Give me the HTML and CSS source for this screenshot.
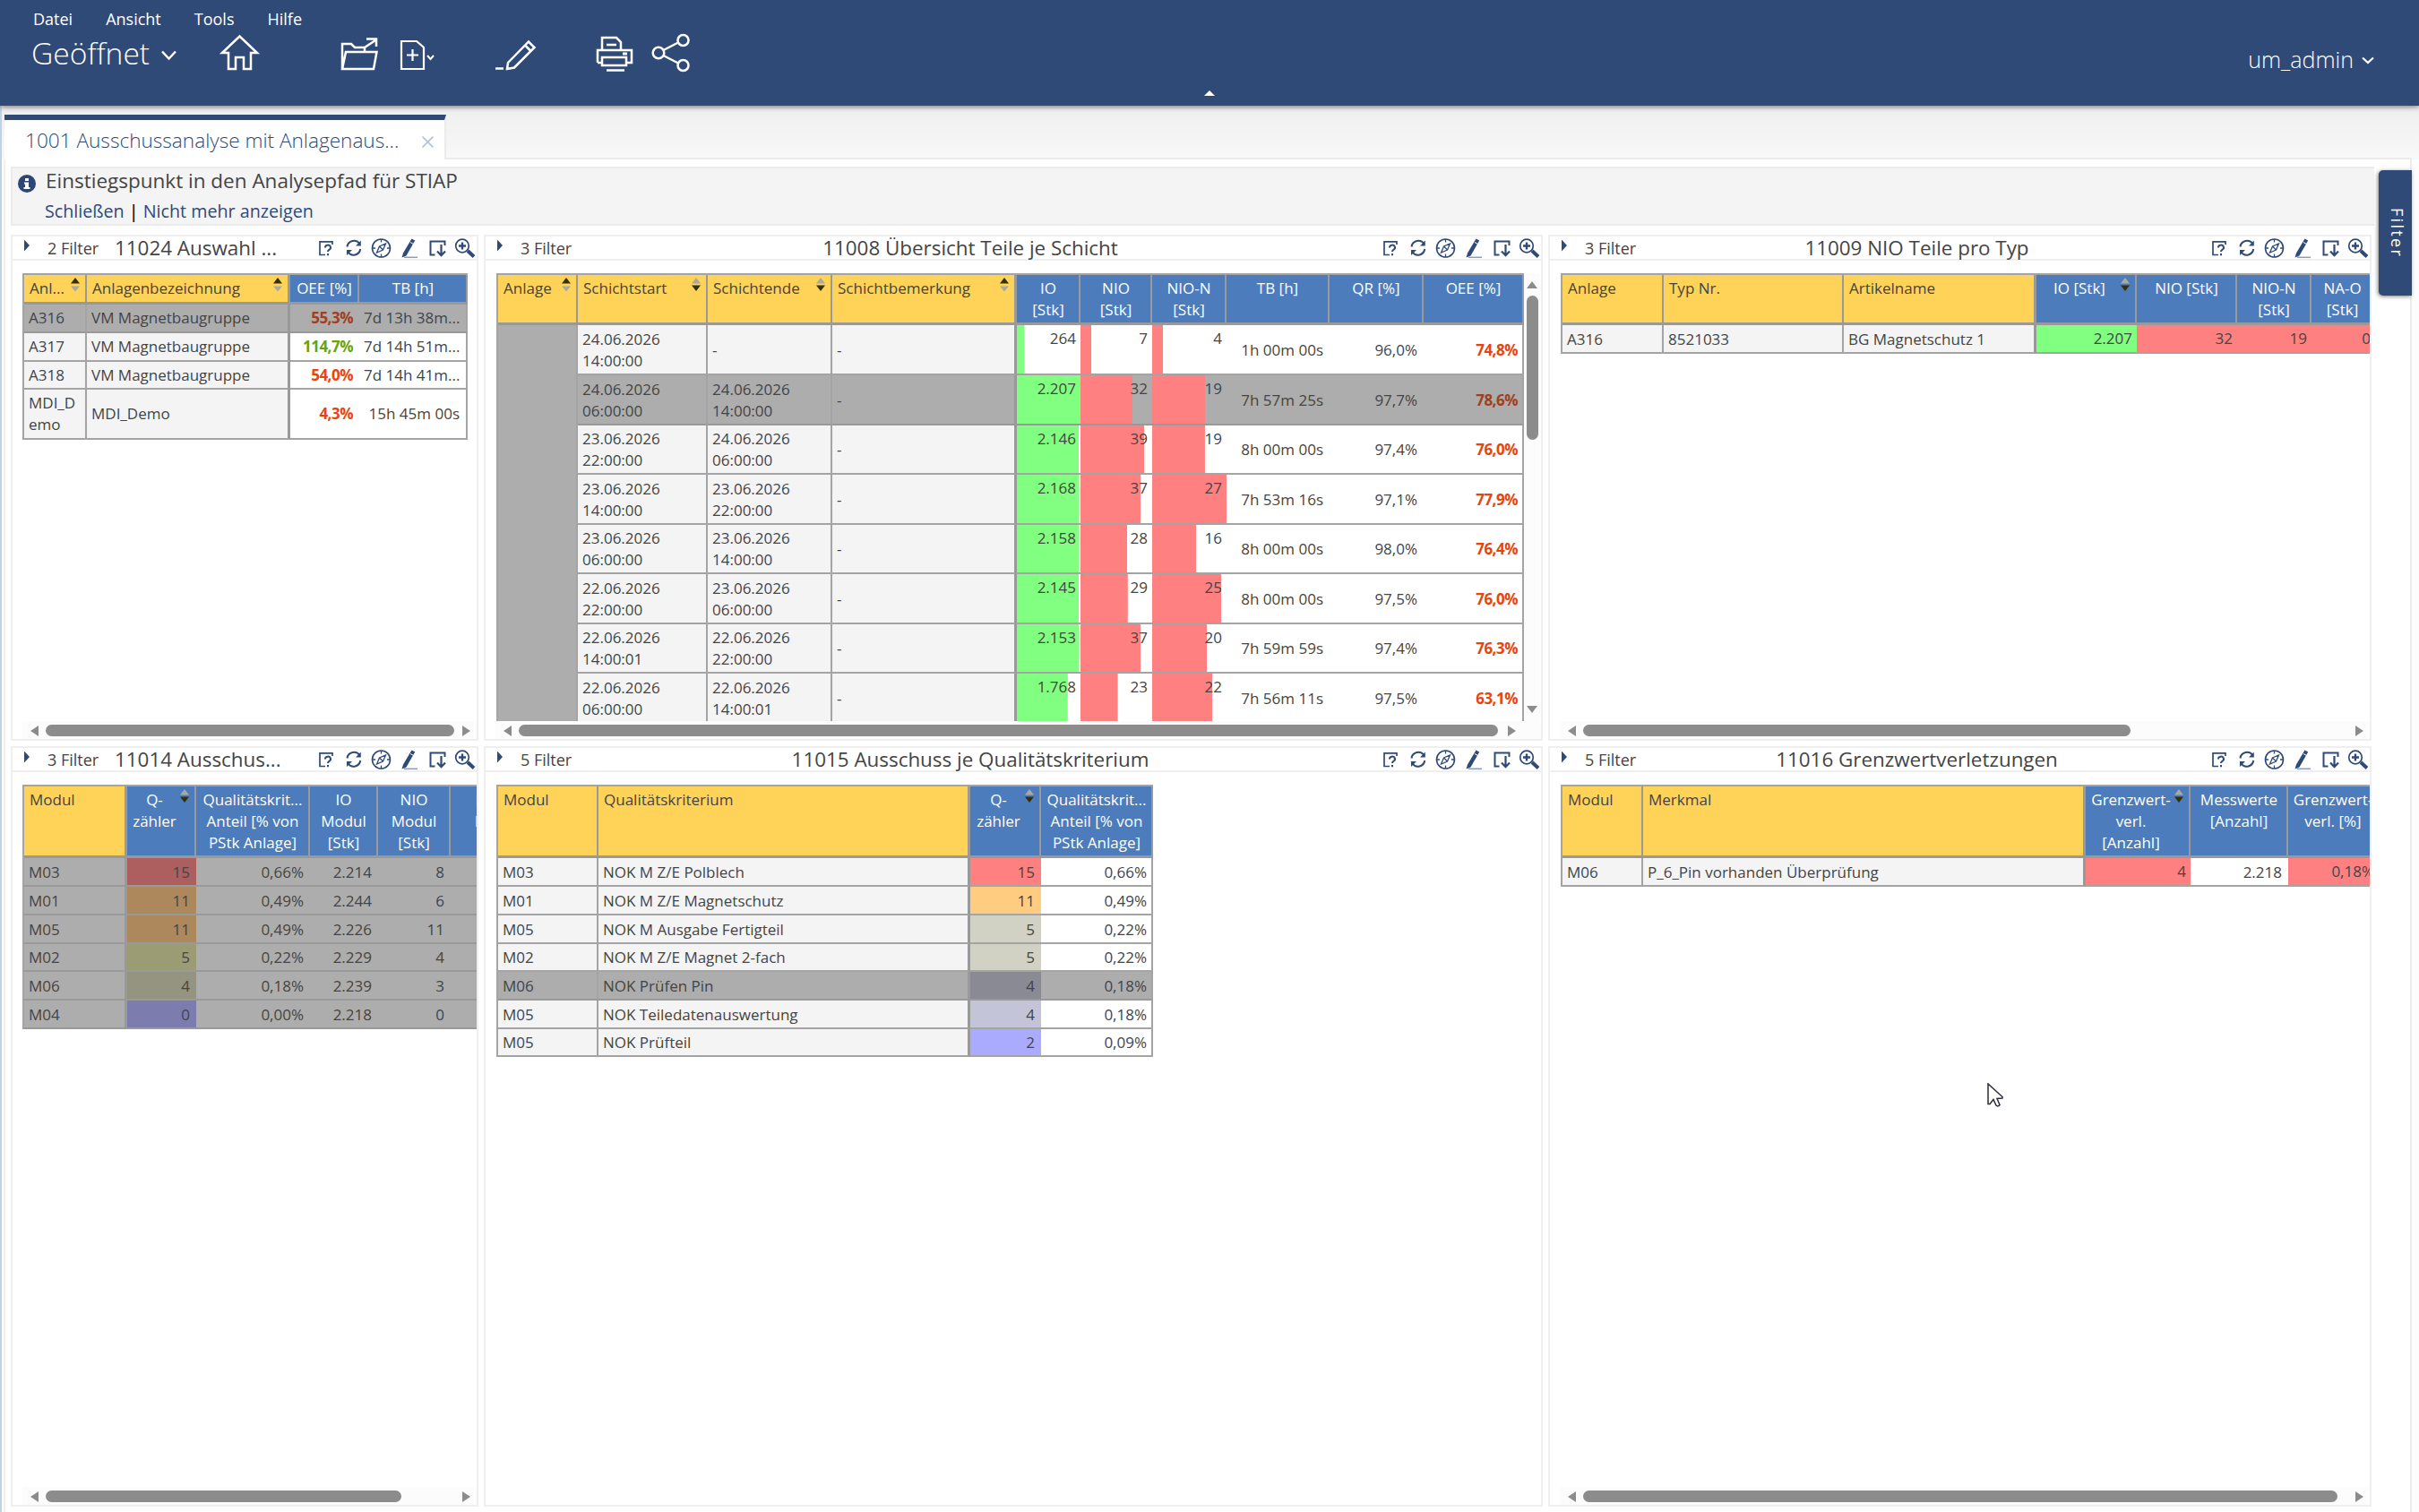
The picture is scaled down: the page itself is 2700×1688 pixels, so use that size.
FILE: index.html
```html
<!DOCTYPE html>
<html lang="de">
<head>
<meta charset="utf-8">
<title>1001 Ausschussanalyse mit Anlagenauswahl</title>
<link rel="stylesheet" href="styles.css">
</head>
<body>
<svg class="defs" aria-hidden="true">
  <symbol id="tools" viewBox="0 0 186 26">
    <g fill="none" stroke="#304a78" stroke-width="1.8">
      <path d="M15 20.5H9V5.800H23V9" stroke-width="1.700"/>
      <path d="M15 12.500a3 2.700 0 1 1 4.600 2.100q-1.600 1-1.600 2.400M18 19v2.200" stroke-width="2"/>
      <path d="M39.500 11.500A7.600 7.600 0 0 1 53.500 8.500M54.200 14A7.600 7.600 0 0 1 40.500 17.500" stroke-width="2"/>
      <path d="M54.800 4.500V10.500H49ZM39 21V15H45Z" fill="#304a78" stroke="none"/>
      <circle cx="77.500" cy="13" r="10" stroke-width="1.600"/>
      <path d="M77.500 3v3.500M77.500 19.500V23M67.500 13H71M84 13h3.500M82.500 8L79.500 15L72.500 18L75.500 11ZM79.500 15L75.500 11" stroke-width="1.300"/>
      <path d="M103 23.300H118" stroke="#8a9bbb" stroke-width="1.500"/>
      <path d="M111.500 2.500L115.200 4.500L105.500 21.500L100.500 23.500L102 18.500Z" fill="#304a78" stroke="none"/>
      <path d="M110 6.500L114 8.700" stroke="#fff" stroke-width="1"/>
      <path d="M137.500 20.500H132.500V5.500H148.500V10" stroke-width="2"/>
      <path d="M144.500 9V21M140 16.500L144.500 21.200L149 16.500" stroke-width="2.200"/>
      <circle cx="168" cy="10.500" r="7.300" stroke-width="1.700"/>
      <path d="M168 6.500v8M164 10.500h8" stroke-width="2.400"/>
      <path d="M174 16L181 22.500" stroke-width="4"/>
    </g>
  </symbol>
  <symbol id="asc" viewBox="0 0 10 16"><path d="M0 6.500L5 0L10 6.500Z" fill="#33300a"/><path d="M0 9.500L5 15.500L10 9.500Z" fill="#a9a9a0"/></symbol>
  <symbol id="desc" viewBox="0 0 10 16"><path d="M0 6.500L5 0L10 6.500Z" fill="#a9a9a0"/><path d="M0 8.500L5 15L10 8.500Z" fill="#33300a"/></symbol>
  <symbol id="left" viewBox="0 0 9 12"><path d="M9 0V12L0 6Z" fill="#8c8c8c"/></symbol>
  <symbol id="right" viewBox="0 0 9 12"><path d="M0 0V12L9 6Z" fill="#8c8c8c"/></symbol>
</svg>

<header class="topbar">
  <nav class="menu"><span>Datei</span><span>Ansicht</span><span>Tools</span><span>Hilfe</span></nav>
  <div class="state">Geöffnet</div>
  <svg class="toolbar" viewBox="0 0 640 50" fill="none" stroke="#fff" stroke-width="2.500">
    <path d="M13 23.500L20.500 31.500L28 23.500"/>
    <path d="M80 25L99.500 6.500L119 25H112V43H104V30H95V43H87V25Z"/>
    <path d="M214 43V15H224L228 19H239V24M214 43L218 24H252.500L249 43ZM239 19L251 11M241 9.500H252V18"/>
    <path d="M280 12H297L305 19V43H280ZM292.500 21V34M286 27.500H299" stroke-width="2.200"/><path d="M309 28L312.500 32L316 28" stroke-width="2"/>
    <path d="M385 42.500H394" /><path d="M398 43L399 36L422 12.500L428.500 19L406 41.500ZM418 16.500L424.500 23"/>
    <path d="M504 22V8H520L525 13V22M509 16H520M499 36V22H537V36H531M505 36H499M504 30H531V39H504ZM509 44.500H529"/><path d="M527 26h5" stroke-width="3"/>
    <circle cx="567" cy="25" r="6.300"/><circle cx="594.500" cy="11" r="6"/><circle cx="594.500" cy="39" r="6"/><path d="M572.500 22L589 13.500M572.500 28L589 36.500"/>
  </svg>
  <div class="user">um_admin<svg viewBox="0 0 14 9" fill="none" stroke="#fff" stroke-width="2.200"><path d="M1 1.500L7 7L13 1.500"/></svg></div>
  <svg class="collapse" viewBox="0 0 12 6"><path d="M0 6L6 0L12 6Z" fill="#fff"/></svg>
</header>

<div class="tabs">
  <div class="tab"><span>1001 Ausschussanalyse mit Anlagenaus...</span><svg viewBox="0 0 12 12" stroke="#b4c0dc" stroke-width="1.500"><path d="M0.500 0.500L11.500 11.500M11.500 0.500L0.500 11.500"/></svg></div>
  <div class="tab-rest"></div>
</div>

<main class="workspace">
  <section class="info">
    <svg viewBox="0 0 20 20"><circle cx="10" cy="10" r="10" fill="#2c4676"/><path d="M8 4h4v3h-4zM7 8.500h5v5.500h1.500v2H6.500v-2H8v-3.500H7z" fill="#fff"/></svg>
    <div class="info-text"><div class="info-title">Einstiegspunkt in den Analysepfad für STIAP</div>
    <div class="info-links"><a>Schließen</a> <b>|</b> <a>Nicht mehr anzeigen</a></div></div>
  </section>

  <div class="panels">
    <section class="panel narrow">
      <div class="head"><i class="tri"></i><span class="count">2 Filter</span><h2>11024 Auswahl ...</h2><svg class="tools"><use href="#tools"/></svg></div>
      <div class="content">
        <table class="t-anlage">
          <colgroup><col class="w70"><col class="w227"><col class="w77"><col class="w121"></colgroup>
          <tr class="h33"><th>Anl...<svg><use href="#asc"/></svg></th><th class="e">Anlagenbezeichnung<svg><use href="#asc"/></svg></th><th class="b">OEE [%]</th><th class="b">TB [h]</th></tr>
          <tr class="sel h32"><td>A316</td><td class="e">VM Magnetbaugruppe</td><td class="v bad">55,3%</td><td class="v l">7d 13h 38m...</td></tr>
          <tr class="h32"><td>A317</td><td class="e">VM Magnetbaugruppe</td><td class="v good">114,7%</td><td class="v l">7d 14h 51m...</td></tr>
          <tr class="h31"><td>A318</td><td class="e">VM Magnetbaugruppe</td><td class="v bad">54,0%</td><td class="v l">7d 14h 41m...</td></tr>
          <tr class="h56"><td>MDI_D<br>emo</td><td class="e">MDI_Demo</td><td class="v bad">4,3%</td><td class="v l">15h 45m 00s</td></tr>
        </table>
      </div>
      <div class="hscroll"><svg><use href="#left"/></svg><i class="thumb th1"></i><svg class="end"><use href="#right"/></svg></div>
    </section>

    <section class="panel">
      <div class="head"><i class="tri"></i><span class="count">3 Filter</span><h2>11008 Übersicht Teile je Schicht</h2><svg class="tools"><use href="#tools"/></svg></div>
      <div class="content">
        <table class="t-schicht">
          <colgroup><col class="w89"><col class="w145"><col class="w139"><col class="w206"><col class="w71"><col class="w80"><col class="w83"><col class="w115"><col class="w105"><col class="w112"></colgroup>
          <tr class="h56"><th>Anlage<svg><use href="#asc"/></svg></th><th>Schichtstart<svg><use href="#desc"/></svg></th><th>Schichtende<svg><use href="#desc"/></svg></th><th class="e">Schichtbemerkung<svg><use href="#asc"/></svg></th><th class="b">IO<br>[Stk]</th><th class="b">NIO<br>[Stk]</th><th class="b">NIO-N<br>[Stk]</th><th class="b">TB [h]</th><th class="b">QR [%]</th><th class="b">OEE [%]</th></tr>
          <tr class="h56"><td class="merged" rowspan="8"></td><td>24.06.2026<br>14:00:00</td><td>-</td><td class="e">-</td><td class="v io" style="--v:12%">264</td><td class="v nio" style="--v:15.500%">7</td><td class="v nio" style="--v:14.500%">4</td><td class="v">1h 00m 00s</td><td class="v">96,0%</td><td class="v bad l">74,8%</td></tr>
          <tr class="sel h56"><td>24.06.2026<br>06:00:00</td><td>24.06.2026<br>14:00:00</td><td class="e">-</td><td class="v io" style="--v:100%">2.207</td><td class="v nio" style="--v:73%">32</td><td class="v nio" style="--v:71%">19</td><td class="v">7h 57m 25s</td><td class="v">97,7%</td><td class="v bad l">78,6%</td></tr>
          <tr class="h55"><td>23.06.2026<br>22:00:00</td><td>24.06.2026<br>06:00:00</td><td class="e">-</td><td class="v io" style="--v:97.500%">2.146</td><td class="v nio" style="--v:89%">39</td><td class="v nio" style="--v:71%">19</td><td class="v">8h 00m 00s</td><td class="v">97,4%</td><td class="v bad l">76,0%</td></tr>
          <tr class="h56"><td>23.06.2026<br>14:00:00</td><td>23.06.2026<br>22:00:00</td><td class="e">-</td><td class="v io" style="--v:98%">2.168</td><td class="v nio" style="--v:84%">37</td><td class="v nio" style="--v:100%">27</td><td class="v">7h 53m 16s</td><td class="v">97,1%</td><td class="v bad l">77,9%</td></tr>
          <tr class="h55"><td>23.06.2026<br>06:00:00</td><td>23.06.2026<br>14:00:00</td><td class="e">-</td><td class="v io" style="--v:98%">2.158</td><td class="v nio" style="--v:65%">28</td><td class="v nio" style="--v:59%">16</td><td class="v">8h 00m 00s</td><td class="v">98,0%</td><td class="v bad l">76,4%</td></tr>
          <tr class="h56"><td>22.06.2026<br>22:00:00</td><td>23.06.2026<br>06:00:00</td><td class="e">-</td><td class="v io" style="--v:97.500%">2.145</td><td class="v nio" style="--v:66%">29</td><td class="v nio" style="--v:93%">25</td><td class="v">8h 00m 00s</td><td class="v">97,5%</td><td class="v bad l">76,0%</td></tr>
          <tr class="h55"><td>22.06.2026<br>14:00:01</td><td>22.06.2026<br>22:00:00</td><td class="e">-</td><td class="v io" style="--v:98%">2.153</td><td class="v nio" style="--v:84%">37</td><td class="v nio" style="--v:74%">20</td><td class="v">7h 59m 59s</td><td class="v">97,4%</td><td class="v bad l">76,3%</td></tr>
          <tr class="h56"><td>22.06.2026<br>06:00:00</td><td>22.06.2026<br>14:00:01</td><td class="e">-</td><td class="v io" style="--v:80%">1.768</td><td class="v nio" style="--v:52%">23</td><td class="v nio" style="--v:81%">22</td><td class="v">7h 56m 11s</td><td class="v">97,5%</td><td class="v bad l">63,1%</td></tr>
        </table>
        <div class="vscroll"><svg viewBox="0 0 12 8"><path d="M0 8L6 0L12 8Z"/></svg><i></i><svg class="end" viewBox="0 0 12 8"><path d="M0 0L6 8L12 0Z"/></svg></div>
      </div>
      <div class="hscroll inset"><svg><use href="#left"/></svg><i class="thumb th2"></i><svg class="end"><use href="#right"/></svg></div>
    </section>

    <section class="panel">
      <div class="head"><i class="tri"></i><span class="count">3 Filter</span><h2>11009 NIO Teile pro Typ</h2><svg class="tools"><use href="#tools"/></svg></div>
      <div class="content">
        <table class="t-typ">
          <colgroup><col class="w113"><col class="w201"><col class="w215"><col class="w112"><col class="w112"><col class="w83"><col class="w83"></colgroup>
          <tr class="h56"><th>Anlage</th><th>Typ Nr.</th><th class="e">Artikelname</th><th class="b s">IO [Stk]<svg><use href="#desc"/></svg></th><th class="b">NIO [Stk]</th><th class="b">NIO-N<br>[Stk]</th><th class="b n">NA-O<br>[Stk]</th></tr>
          <tr class="h32"><td>A316</td><td>8521033</td><td class="e">BG Magnetschutz 1</td><td class="v io" style="--v:100%">2.207</td><td class="v nio" style="--v:100%">32</td><td class="v nio" style="--v:100%">19</td><td class="v nio far" style="--v:100%">0</td></tr>
        </table>
      </div>
      <div class="hscroll"><svg><use href="#left"/></svg><i class="thumb th3"></i><svg class="end"><use href="#right"/></svg></div>
    </section>

    <section class="panel narrow">
      <div class="head"><i class="tri"></i><span class="count">3 Filter</span><h2>11014 Ausschus...</h2><svg class="tools"><use href="#tools"/></svg></div>
      <div class="content">
        <table class="t-modul">
          <colgroup><col class="w115"><col class="w77"><col class="w127"><col class="w76"><col class="w81"><col class="w105"></colgroup>
          <tr class="h80"><th class="e">Modul</th><th class="b s">Q-<br>zähler<svg><use href="#desc"/></svg></th><th class="b">Qualitätskrit...<br>Anteil [% von<br>PStk Anlage]</th><th class="b">IO<br>Modul<br>[Stk]</th><th class="b">NIO<br>Modul<br>[Stk]</th><th class="b">NIO-N<br>Modul</th></tr>
          <tr class="sel h32"><td class="e">M03</td><td class="v q15">15</td><td class="v">0,66%</td><td class="v">2.214</td><td class="v">8</td><td class="v"></td></tr>
          <tr class="sel h32"><td class="e">M01</td><td class="v q11">11</td><td class="v">0,49%</td><td class="v">2.244</td><td class="v">6</td><td class="v"></td></tr>
          <tr class="sel h32"><td class="e">M05</td><td class="v q11">11</td><td class="v">0,49%</td><td class="v">2.226</td><td class="v">11</td><td class="v"></td></tr>
          <tr class="sel h31"><td class="e">M02</td><td class="v q5">5</td><td class="v">0,22%</td><td class="v">2.229</td><td class="v">4</td><td class="v"></td></tr>
          <tr class="sel h32"><td class="e">M06</td><td class="v q4">4</td><td class="v">0,18%</td><td class="v">2.239</td><td class="v">3</td><td class="v"></td></tr>
          <tr class="sel h32"><td class="e">M04</td><td class="v q0">0</td><td class="v">0,00%</td><td class="v">2.218</td><td class="v">0</td><td class="v"></td></tr>
        </table>
      </div>
      <div class="hscroll"><svg><use href="#left"/></svg><i class="thumb th4"></i><svg class="end"><use href="#right"/></svg></div>
    </section>

    <section class="panel">
      <div class="head"><i class="tri"></i><span class="count">5 Filter</span><h2>11015 Ausschuss je Qualitätskriterium</h2><svg class="tools"><use href="#tools"/></svg></div>
      <div class="content">
        <table class="t-krit">
          <colgroup><col class="w112"><col class="w415"><col class="w79"><col class="w125"></colgroup>
          <tr class="h80"><th>Modul</th><th class="e">Qualitätskriterium</th><th class="b s">Q-<br>zähler<svg><use href="#desc"/></svg></th><th class="b">Qualitätskrit...<br>Anteil [% von<br>PStk Anlage]</th></tr>
          <tr class="h32"><td>M03</td><td class="e">NOK M Z/E Polblech</td><td class="v k1">15</td><td class="v l">0,66%</td></tr>
          <tr class="h32"><td>M01</td><td class="e">NOK M Z/E Magnetschutz</td><td class="v k2">11</td><td class="v l">0,49%</td></tr>
          <tr class="h32"><td>M05</td><td class="e">NOK M Ausgabe Fertigteil</td><td class="v k3">5</td><td class="v l">0,22%</td></tr>
          <tr class="h31"><td>M02</td><td class="e">NOK M Z/E Magnet 2-fach</td><td class="v k3">5</td><td class="v l">0,22%</td></tr>
          <tr class="sel h32"><td>M06</td><td class="e">NOK Prüfen Pin</td><td class="v k4">4</td><td class="v l">0,18%</td></tr>
          <tr class="h32"><td>M05</td><td class="e">NOK Teiledatenauswertung</td><td class="v k5">4</td><td class="v l">0,18%</td></tr>
          <tr class="h31"><td>M05</td><td class="e">NOK Prüfteil</td><td class="v k6">2</td><td class="v l">0,09%</td></tr>
        </table>
      </div>
    </section>

    <section class="panel">
      <div class="head"><i class="tri"></i><span class="count">5 Filter</span><h2>11016 Grenzwertverletzungen</h2><svg class="tools"><use href="#tools"/></svg></div>
      <div class="content">
        <table class="t-grenz">
          <colgroup><col class="w90"><col class="w494"><col class="w117"><col class="w109"><col class="w101"></colgroup>
          <tr class="h80"><th>Modul</th><th class="e">Merkmal</th><th class="b s">Grenzwert-<br>verl.<br>[Anzahl]<svg><use href="#desc"/></svg></th><th class="b">Messwerte<br>[Anzahl]</th><th class="b">Grenzwert-<br>verl. [%]</th></tr>
          <tr class="h32"><td>M06</td><td class="e">P_6_Pin vorhanden Überprüfung</td><td class="v nio" style="--v:100%">4</td><td class="v">2.218</td><td class="v nio" style="--v:100%">0,18%</td></tr>
        </table>
      </div>
      <div class="hscroll"><svg><use href="#left"/></svg><i class="thumb th6"></i><svg class="end"><use href="#right"/></svg></div>
    </section>
  </div>
  <aside class="filter-tab">Filter</aside>
</main>
<svg class="pointer" viewBox="0 0 18 27"><path d="M1 1V23.500H3L7 18.500L10 25Q12 27 14 24.500L11 17.500L17 17V15.500Z" fill="#fff" stroke="#2d2d3c" stroke-width="1.500"/></svg>
</body>
</html>
```
FILE: styles.css
```css
* { box-sizing: border-box; }
body { margin: 0; width: 2700px; height: 1688px; overflow: hidden; display: flex; flex-direction: column; background: #fcfcfc; font-family: "Open Sans", "Noto Sans", sans-serif; color: #444; }
svg { display: block; flex: none; }
.defs { position: absolute; width: 0; height: 0; }

/* top bar */
.topbar { position: relative; z-index: 2; height: 118px; flex: none; background: #304a78; color: #fff; box-shadow: 0 1px 6px rgba(0,0,0,.55); display: grid; grid-template-columns: 168px 640px 1fr auto; grid-template-rows: 33px 50px 35px; }
.menu { grid-column: 1 / 5; grid-row: 1; display: flex; gap: 37px; padding-left: 37px; font-size: 18px; line-height: 24px; padding-top: 9px; }
.state { grid-column: 1; grid-row: 2; padding-left: 35px; font-size: 33.600px; font-weight: 300; line-height: 50px; margin-top: 1px; white-space: nowrap; }
.toolbar { grid-column: 2; grid-row: 2; width: 640px; height: 50px; margin-top: 1px; }
.user { grid-column: 4; grid-row: 2; display: flex; align-items: center; gap: 9px; padding: 16px 50px 0 0; font-size: 25px; font-weight: 300; line-height: 32px; }
.user svg { width: 14px; height: 9px; margin-top: 2px; }
.collapse { position: absolute; left: 1344px; top: 101px; width: 12px; height: 6px; }

/* tabs */
.tabs { height: 60px; flex: none; display: flex; background: linear-gradient(#efefef, #f8f8f8 60px); border-left: 2px solid #bcd3e8; padding: 10px 8px 0 3px; }
.tab { width: 493px; border-top: 6px solid #304a78; background: #fff; border-right: 2px solid #ebebeb; display: flex; align-items: center; padding: 1px 12px 0 23px; font-size: 22.600px; font-weight: 300; color: #304a78; white-space: nowrap; }
.tab svg { width: 13px; height: 13px; margin-left: auto; margin-top: 3px; }
.tab-rest { flex: 1; border-bottom: 2px solid #ebebeb; }

/* workspace */
.workspace { flex: 1; position: relative; background: #fff; width: 2692px; border-left: 2px solid #bcd3e8; border-right: 2px solid #ececec; padding: 8px 0 0 10px; }
.workspace::before { content: ""; position: absolute; left: 2px; top: 0; bottom: 0; width: 2px; background: #f0f0f0; }
.info { width: 2638px; height: 66px; background: #f4f4f4; border: 2px solid #ebebeb; border-right: 0; display: flex; padding: 6px 0 0 6px; gap: 11px; }
.info > svg { width: 20px; height: 20px; margin-top: 1px; }
.info-title { font-size: 22.500px; line-height: 24px; margin-top: -4px; }
.info-links { font-size: 19.700px; line-height: 26px; color: #304a78; margin-top: 9px; margin-left: -1px; white-space: nowrap; }
.info-links b { color: #222; font-weight: 600; }

.panels { display: grid; grid-template-columns: 522px 1182px 919px; grid-template-rows: 565px 849px; gap: 6px; margin-top: 10px; }
.panel { border: 2px solid #efefef; display: flex; flex-direction: column; overflow: hidden; min-width: 0; }
.head { height: 27px; flex: none; display: flex; align-items: center; border-bottom: 2px solid #efefef; padding-left: 13px; white-space: nowrap; overflow: visible; }
.tri { width: 6px; height: 13px; background: #304a78; clip-path: polygon(0 0, 100% 50%, 0 100%); margin-top: -5px; }
.count { font-size: 18px; margin-left: 20px; margin-top: 1px; width: 58px; }
.head h2 { margin: 0; flex: 1; min-width: 0; text-align: center; font-size: 22.400px; font-weight: 400; line-height: 27px; padding: 0 9px 0 0; }
.narrow .head h2 { text-align: left; padding: 0 0 0 17px; }
.tools { width: 186px; height: 26px; margin-right: -2px; }

.content { flex: 1; min-height: 0; margin: 14px 0 0 11px; overflow: hidden; display: flex; align-items: flex-start; }
.panel:not(.narrow) .content { margin-left: 12px; }
table { flex: none; table-layout: fixed; border-collapse: separate; border-spacing: 0; border-left: 2px solid #a4a4a4; border-top: 2px solid #a4a4a4; font-size: 17px; line-height: 24px; }
.t-anlage { width: 497px; }
.t-schicht { width: 1147px; }
.t-typ { width: 921px; }
.t-modul { width: 583px; }
.t-krit { width: 733px; }
.t-grenz { width: 913px; }
th, td { border-right: 2px solid #a4a4a4; border-bottom: 2px solid #a4a4a4; white-space: nowrap; overflow: hidden; text-align: left; }
td { padding: 1px 5px 0 5px; background: #f4f4f4; }
th { position: relative; background: #ffd358; font-weight: 400; vertical-align: top; padding: 3px 0 0 6px; border-bottom-width: 3px; border-color: #999; }
th.b { background: #4c7cbc; color: #fff; text-align: center; padding: 3px 0 0 1px; }
th.b.s { padding-right: 15px; }
th.b.n { padding-right: 13px; }
th svg { position: absolute; right: 6px; top: 3px; width: 10px; height: 16px; }
.e { border-right: 3px solid #999; }
td.v { background-color: #fff; border-right: 0; text-align: right; padding-right: 7px; }
td.v.l { border-right: 2px solid #a4a4a4; padding-right: 5px; }
.t-anlage td { padding-top: 0; }
.t-anlage td.v.l { padding-right: 7px; }
td.io, td.nio { vertical-align: top; padding-top: 3px; background-repeat: no-repeat; background-size: var(--v) 100%; }
td.v.io, td.v.nio { padding-right: 5px; }
td.v.far { padding-right: 17px; }
td.io { background-image: linear-gradient(#80ff80, #80ff80); }
td.nio { background-image: linear-gradient(#ff8080, #ff8080); }
tr.sel td, td.merged { background-color: #adadad; border-bottom-color: #999; }
.bad { color: #e8450d; font-weight: 700; letter-spacing: -.5px; }
.good { color: #6aa20a; font-weight: 700; letter-spacing: -.5px; }
.sel .bad { color: #a0401e; }
tr td.q15.q15 { background: #ad5f5f; }
tr td.q11.q11 { background: #ad885c; }
tr td.q5.q5 { background: #9c9c74; }
tr td.q4.q4 { background: #949480; }
tr td.q0.q0 { background: #7c7cae; }
tr td.k1.k1 { background: #ff8080; }
tr td.k2.k2 { background: #ffcc80; }
tr td.k3.k3 { background: #d1d1c4; }
tr td.k4.k4 { background: #8a8a94; }
tr td.k5.k5 { background: #c4c4d8; }
tr td.k6.k6 { background: #aaaaff; }

.h31 { height: 31px; } .h32 { height: 32px; } .h33 { height: 33px; }
.h55 { height: 55px; } .h56 { height: 56px; } .h80 { height: 80px; }
.w70 { width: 70px; } .w71 { width: 71px; } .w76 { width: 76px; } .w77 { width: 77px; } .w79 { width: 79px; }
.w80 { width: 80px; } .w81 { width: 81px; } .w83 { width: 83px; } .w89 { width: 89px; } .w90 { width: 90px; }
.w101 { width: 101px; } .w105 { width: 105px; } .w109 { width: 109px; } .w112 { width: 112px; } .w113 { width: 113px; }
.w115 { width: 115px; } .w117 { width: 117px; } .w121 { width: 121px; } .w125 { width: 125px; } .w127 { width: 127px; }
.w139 { width: 139px; } .w145 { width: 145px; } .w201 { width: 201px; } .w206 { width: 206px; } .w215 { width: 215px; }
.w227 { width: 227px; } .w415 { width: 415px; } .w494 { width: 494px; }

.hscroll { height: 20px; flex: none; margin-left: 11px; background: #fcfcfc; display: flex; align-items: center; gap: 8px; padding: 1px 7px 0 9px; }
.hscroll.inset { padding-right: 28px; }
.hscroll svg { width: 9px; height: 12px; }
.hscroll .end, .vscroll .end { margin-left: auto; }
.thumb { height: 13px; border-radius: 7px; background: #8c8c8c; }
.th1 { width: 456px; } .th2 { width: 1093px; } .th3 { width: 611px; } .th4 { width: 397px; } .th6 { width: 842px; }
.vscroll { align-self: stretch; width: 18px; background: #fcfcfc; display: flex; flex-direction: column; align-items: center; padding: 9px 0 9px 0; }
.vscroll svg { width: 12px; height: 8px; fill: #8c8c8c; }
.vscroll i { width: 13px; height: 161px; border-radius: 7px; background: #8c8c8c; margin-top: 8px; }
.vscroll .end { margin: auto 0 0; }

.filter-tab { position: absolute; right: -2px; top: 12px; width: 37px; height: 140px; border-radius: 5px 0 0 5px; background: #304a78; box-shadow: -1px 1px 4px rgba(0,0,0,.5); color: #fff; writing-mode: vertical-rl; display: flex; align-items: center; justify-content: center; padding-left: 4px; font-size: 18px; font-weight: 400; letter-spacing: 2.300px; line-height: 33px; }
.pointer { position: absolute; left: 2218px; top: 1209px; width: 18px; height: 27px; }
```
